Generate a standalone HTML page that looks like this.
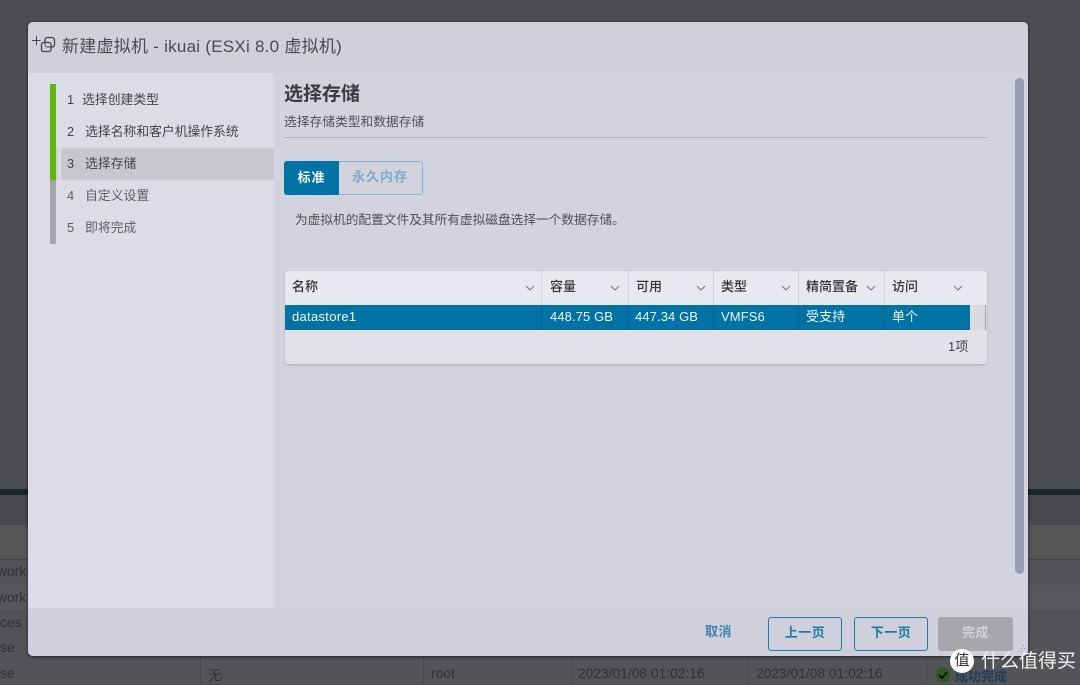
<!DOCTYPE html>
<html lang="zh"><head><meta charset="utf-8"><style>
html,body{margin:0;padding:0}
body{width:1080px;height:684px;position:relative;overflow:hidden;background:#4d4e52;font-family:"Liberation Sans","Noto Sans CJK SC",sans-serif;color:#333}
.a{position:absolute;white-space:nowrap}
.bg{color:#2f3033;font-size:13.800px}
.th{font-size:13px;color:#333;top:279px;line-height:16px;font-weight:500}
.td{font-size:13px;color:#f2f6f9;top:309px;line-height:16px;letter-spacing:.1px}
.sep{position:absolute;top:271px;width:1px;height:59px;background:#d2d2dc}
.step{font-size:12.800px;left:67px;line-height:16px;color:#444}
.step b{font-weight:400;display:inline-block}
.btn{position:absolute;top:617px;height:34px;box-sizing:border-box;border:1px solid #1a7fae;border-radius:3px;color:#1c7aa6;font-size:13px;font-weight:700;text-align:center;line-height:30px;letter-spacing:.5px}
</style></head><body>
<div class="a" style="left:0;top:489px;width:1080px;height:6px;background:#1a252d"></div>
<div class="a" style="left:0;top:495px;width:1080px;height:30px;background:#46484b"></div>
<div class="a" style="left:0;top:525px;width:1080px;height:34px;background:#555658"></div>
<div class="a" style="left:0;top:559px;width:1080px;height:1px;background:#444548"></div>
<div class="a" style="left:0;top:560px;width:1080px;height:124px;background:#525356"></div>
<div class="a" style="left:0;top:585px;width:1080px;height:25px;background:#56575a"></div>
<div class="a" style="left:0;top:635px;width:1080px;height:49px;background:#535457"></div>
<div class="a bg" style="left:-3px;top:564px">work S</div>
<div class="a bg" style="left:-3px;top:590px">work C</div>
<div class="a bg" style="left:0;top:615px">ces</div>
<div class="a bg" style="left:0;top:640px">se</div>
<div class="a bg" style="left:0;top:666px">se</div>
<div class="a" style="left:200px;top:656px;width:1px;height:28px;background:#48494c"></div>
<div class="a" style="left:423px;top:656px;width:1px;height:28px;background:#48494c"></div>
<div class="a" style="left:571px;top:656px;width:1px;height:28px;background:#48494c"></div>
<div class="a" style="left:748px;top:656px;width:1px;height:28px;background:#48494c"></div>
<div class="a" style="left:926px;top:656px;width:1px;height:28px;background:#48494c"></div>
<div class="a bg" style="left:208px;top:664px">无</div>
<div class="a bg" style="left:431px;top:666px">root</div>
<div class="a bg" style="left:578px;top:666px">2023/01/08 01:02:16</div>
<div class="a bg" style="left:756px;top:666px">2023/01/08 01:02:16</div>
<svg class="a" style="left:935px;top:667px" width="16" height="16" viewBox="0 0 16 16"><circle cx="8" cy="8" r="7.500" fill="#2c5a1c"/><path d="M4 8l3 3 5-6" fill="none" stroke="#111" stroke-width="2"/></svg>
<div class="a" style="left:955px;top:666px;font-size:13px;font-weight:700;color:#1d3f58">成功完成</div>

<div class="a" style="left:28px;top:22px;width:1000px;height:634px;background:#d3d3df;border-radius:5px;box-shadow:0 1px 3px rgba(0,0,0,.55),0 0 1px rgba(0,0,0,.5);overflow:hidden">
 <div class="a" style="left:0;top:0;width:1000px;height:51px;background:#d0d0da"></div>
 <div class="a" style="left:0;top:51px;width:246px;height:535px;background:#dcdce6"></div>
 <div class="a" style="left:0;top:586px;width:1000px;height:48px;background:#d0d0dc"></div>
</div>

<svg class="a" style="left:31px;top:34px" width="26" height="20" viewBox="0 0 26 20"><path d="M1 6.500h8.500M5.500 2v9" stroke="#444" stroke-width="1" fill="none"/><rect x="14" y="3.500" width="9.500" height="9.500" rx="2.500" fill="none" stroke="#444" stroke-width="1.300"/><rect x="10.500" y="8.500" width="9.500" height="9" rx="2" fill="#d0d0da" fill-opacity=".3" stroke="#444" stroke-width="1.300"/></svg>
<div class="a" style="left:62px;top:37px;font-size:17px;line-height:20px;color:#4a4a4e;letter-spacing:.25px">新建虚拟机 - ikuai (ESXi 8.0 虚拟机)</div>

<div class="a" style="left:50px;top:84px;width:6px;height:96px;background:#62b70f"></div>
<div class="a" style="left:50px;top:180px;width:6px;height:64px;background:#a6a6aa"></div>
<div class="a" style="left:56px;top:148px;width:2px;height:32px;background:#d0d0d8"></div>
<div class="a" style="left:61px;top:148px;width:213px;height:32px;background:#c7c7ce;border-radius:3px 0 0 3px"></div>
<div class="a step" style="top:92px">1<b style="margin-left:8px">选择创建类型</b></div>
<div class="a step" style="top:124px">2<b style="margin-left:11px">选择名称和客户机操作系统</b></div>
<div class="a step" style="top:156px">3<b style="margin-left:11px">选择存储</b></div>
<div class="a step" style="top:188px;color:#5c5c60">4<b style="margin-left:11px">自定义设置</b></div>
<div class="a step" style="top:220px;color:#5c5c60">5<b style="margin-left:11px">即将完成</b></div>

<div class="a" style="left:284px;top:84px;font-size:19px;line-height:22px;font-weight:700;color:#3a3a3e">选择存储</div>
<div class="a" style="left:284px;top:114px;font-size:12.750px;line-height:16px;color:#4f4f55">选择存储类型和数据存储</div>
<div class="a" style="left:284px;top:137px;width:703px;height:1px;background:#b0b0ba"></div>

<div class="a" style="left:284px;top:161px;width:139px;height:34px;box-sizing:border-box;border:1px solid #7fb3d0;border-radius:3px"></div>
<div class="a" style="left:284px;top:161px;width:55px;height:34px;background:#0072a3;border-radius:3px 0 0 3px;color:#f4f7fa;font-size:13px;font-weight:700;text-align:center;line-height:33px;letter-spacing:1px">标准</div>
<div class="a" style="left:352px;top:169px;font-size:13px;line-height:16px;font-weight:700;color:#79adc9;letter-spacing:1px">永久内存</div>
<div class="a" style="left:295px;top:212px;font-size:12.700px;line-height:16px;color:#4f4f55">为虚拟机的配置文件及其所有虚拟磁盘选择一个数据存储。</div>

<div class="a" style="left:285px;top:271px;width:702px;height:93px;background:#e1e1e9;border-radius:3px;box-shadow:0 1px 2px rgba(0,0,0,.18)"></div>
<div class="a" style="left:285px;top:271px;width:702px;height:34px;background:#e8e8ee;border-radius:3px 3px 0 0"></div>
<div class="a" style="left:285px;top:305px;width:685px;height:25px;background:#0072a3"></div>
<div class="a" style="left:970px;top:305px;width:17px;height:25px;background:#dadae2"></div>
<div class="a" style="left:985px;top:305px;width:1px;height:25px;background:#a0a0a8"></div>
<div class="sep" style="left:541px"></div><div class="sep" style="left:628px"></div><div class="sep" style="left:713px"></div><div class="sep" style="left:798px"></div><div class="sep" style="left:884px"></div>
<div class="sep" style="left:541px;top:305px;height:25px;background:#00648f"></div><div class="sep" style="left:628px;top:305px;height:25px;background:#00648f"></div><div class="sep" style="left:713px;top:305px;height:25px;background:#00648f"></div><div class="sep" style="left:798px;top:305px;height:25px;background:#00648f"></div><div class="sep" style="left:884px;top:305px;height:25px;background:#00648f"></div>
<div class="a th" style="left:292px">名称</div><div class="a th" style="left:550px">容量</div><div class="a th" style="left:636px">可用</div><div class="a th" style="left:721px">类型</div><div class="a th" style="left:806px">精简置备</div><div class="a th" style="left:892px">访问</div>
<svg class="a" style="left:0;top:0" width="1080" height="684" fill="none" stroke="#777" stroke-width="1"><path d="M526 286l4 4 4-4M611 286l4 4 4-4M697 286l4 4 4-4M782 286l4 4 4-4M867 286l4 4 4-4M954 286l4 4 4-4"/></svg>
<div class="a td" style="left:292px;letter-spacing:.3px">datastore1</div><div class="a td" style="left:550px">448.75 GB</div><div class="a td" style="left:635px">447.34 GB</div><div class="a td" style="left:721px">VMFS6</div><div class="a td" style="left:806px">受支持</div><div class="a td" style="left:892px">单个</div>
<div class="a" style="left:948px;top:339px;font-size:13px;line-height:16px;color:#444">1项</div>

<div class="a" style="left:1015px;top:78px;width:9px;height:496px;background:#9a9ab4;border-radius:5px"></div>

<div class="a" style="left:705px;top:624px;font-size:13px;line-height:16px;font-weight:700;color:#3f83a9;letter-spacing:.5px">取消</div>
<div class="btn" style="left:768px;width:74px">上一页</div>
<div class="btn" style="left:854px;width:74px">下一页</div>
<div class="btn" style="left:938px;width:75px;background:#a6a6ac;border-color:#a6a6ac;color:#d0d0d6">完成</div>
<svg class="a" style="left:1016px;top:645px" width="12" height="11" fill="#8a8a90"><rect x="7" y="0" width="1" height="1"/><rect x="5" y="3" width="1" height="1"/><rect x="8" y="3" width="1" height="1"/><rect x="2" y="6" width="1" height="1"/><rect x="5" y="6" width="1" height="1"/><rect x="8" y="6" width="1" height="1"/></svg>

<div class="a" style="left:950px;top:649px;width:24px;height:24px;border-radius:50%;background:#fbfbfb;color:#333;font-size:15px;line-height:23px;text-align:center">值</div>
<div class="a" style="left:981px;top:650px;font-size:19px;line-height:24px;color:#f2f2f2">什么值得买</div>
</body></html>
